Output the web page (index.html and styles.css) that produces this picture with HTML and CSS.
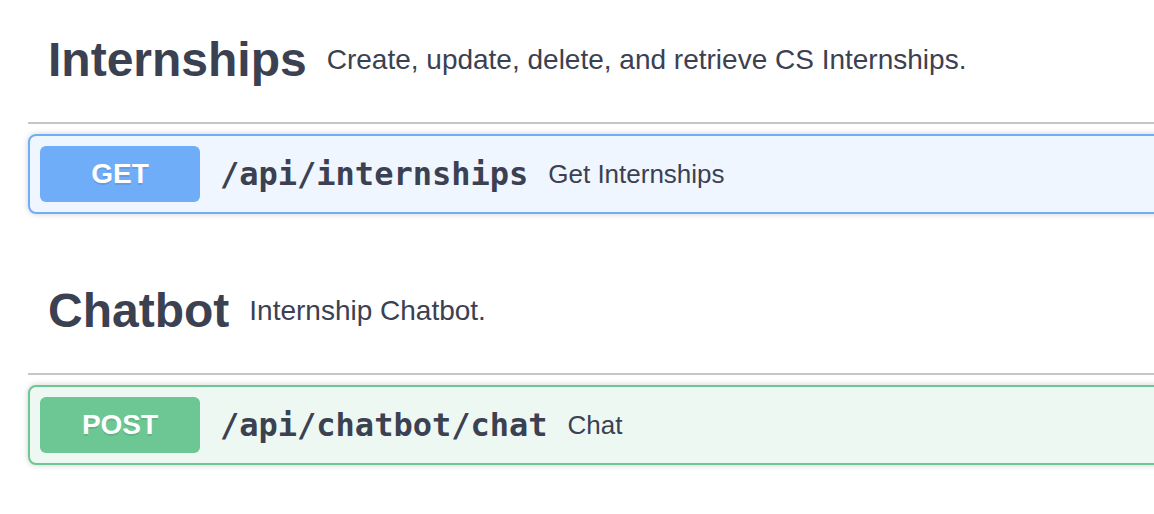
FILE: index.html
```html
<!DOCTYPE html>
<html lang="en">
<head>
<meta charset="utf-8">
<title>API</title>
<link rel="stylesheet" href="styles.css">
</head>
<body>
<div class="page">
  <section class="tag-section">
    <h3 class="tag">
      <span class="tag-name">Internships</span>
      <small class="tag-desc">Create, update, delete, and retrieve CS Internships.</small>
    </h3>
    <div class="opblock opblock-get">
      <div class="summary">
        <span class="method">GET</span>
        <span class="path">/api/internships</span>
        <span class="desc">Get Internships</span>
      </div>
    </div>
  </section>
  <section class="tag-section">
    <h3 class="tag">
      <span class="tag-name">Chatbot</span>
      <small class="tag-desc">Internship Chatbot.</small>
    </h3>
    <div class="opblock opblock-post">
      <div class="summary">
        <span class="method">POST</span>
        <span class="path">/api/chatbot/chat</span>
        <span class="desc">Chat</span>
      </div>
    </div>
  </section>
</div>
</body>
</html>
```
FILE: styles.css
```css
html, body {
  margin: 0;
  padding: 0;
  background: #ffffff;
  overflow: hidden;
}
body {
  font-family: "Liberation Sans", Arial, sans-serif;
  color: #3b4151;
}
.page {
  padding-left: 28px;
  width: calc(100% + 40px);
  box-sizing: border-box;
}
.tag-section {
  display: flex;
  flex-direction: column;
}
.tag {
  display: flex;
  align-items: center;
  margin: 0 0 10px;
  padding: 32px 40px 34px 20px;
  border-bottom: 2px solid #c4c6cb;
  font-size: 48px;
  line-height: 56px;
  font-weight: 700;
}
.tag-name {
  white-space: nowrap;
}
.tag-desc {
  padding: 0 20px;
  font-size: 28px;
  line-height: 32px;
  font-weight: 400;
  flex: 1;
}
.opblock {
  margin: 0 0 37px;
  border: 2px solid;
  border-radius: 8px;
  box-shadow: 0 0 6px rgba(0, 0, 0, 0.19);
}
.opblock-get {
  background: #eff6ff;
  border-color: #70adf9;
}
.opblock-post {
  background: #eef8f3;
  border-color: #6cc794;
}
.summary {
  display: flex;
  align-items: center;
  padding: 10px;
}
.method {
  min-width: 160px;
  padding: 12px 0;
  border-radius: 6px;
  text-align: center;
  color: #ffffff;
  font-size: 28px;
  line-height: 32px;
  font-weight: 700;
  text-shadow: 0 2px 0 rgba(0, 0, 0, 0.1);
}
.opblock-get .method {
  background: #70adf9;
}
.opblock-post .method {
  background: #6cc794;
}
.path {
  padding: 0 20px;
  font-family: "DejaVu Sans Mono", "Liberation Mono", monospace;
  font-size: 32px;
  font-weight: 700;
  color: #3b4151;
}
.desc {
  font-size: 26px;
  color: #3b4151;
}
```
